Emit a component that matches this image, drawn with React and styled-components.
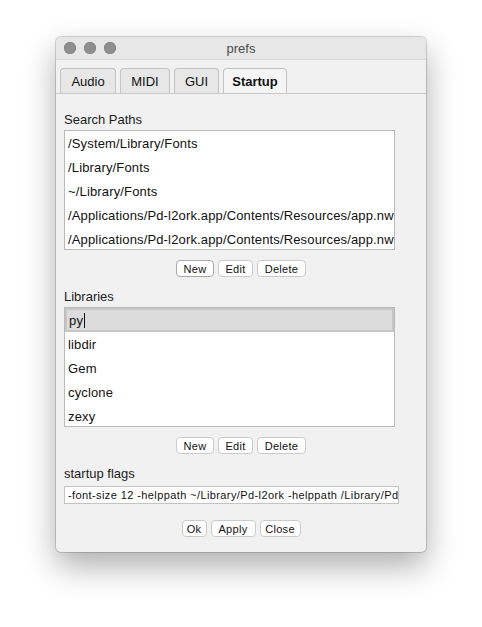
import * as React from 'react';
import styled, { createGlobalStyle } from "styled-components";

const GlobalStyle = createGlobalStyle`
    body {
        margin: 0;
        background: #fff;
        font-family: "Liberation Sans", Arial, sans-serif;
    }
`

const Page = styled.div`
    display: flex;
    justify-content: center;
    padding-top: 37px;
    height: 627px;
    box-sizing: border-box;
`

const Window = styled.div`
    width: 370px;
    height: 515px;
    background: #f1f1f1;
    border-radius: 5px;
    overflow: hidden;
    box-shadow: 0 14px 32px rgba(0, 0, 0, 0.32), 0 0 0 1px rgba(0, 0, 0, 0.16);
    display: flex;
    flex-direction: column;
`

const TitleBar = styled.div`
    height: 22px;
    flex: none;
    background: #e7e7e7;
    border-bottom: 1px solid #d9d9d9;
    display: flex;
    align-items: center;
    position: relative;
    padding-left: 8px;
    gap: 8px;
`

const Light = styled.span`
    width: 12px;
    height: 12px;
    border-radius: 50%;
    background: #8e8e8e;
    box-shadow: inset 0 0 0 0.5px #7a7a7a;
`

const Title = styled.div`
    position: absolute;
    left: 0;
    right: 0;
    text-align: center;
    font-size: 13px;
    color: #4d4d4d;
`

const TabBar = styled.div`
    display: flex;
    gap: 4px;
    padding: 8px 0 0 4px;
    border-bottom: 1px solid #c9c9c9;
`

const Tab = styled.div`
    width: ${p => p.$w}px;
    height: 25px;
    box-sizing: border-box;
    display: flex;
    align-items: center;
    justify-content: center;
    font-size: 13px;
    font-weight: ${p => (p.$active ? 'bold' : 'normal')};
    color: #111;
    background: ${p => (p.$active ? '#f5f5f5' : '#e7e7e7')};
    border: 1px solid #c4c4c4;
    border-bottom: none;
    border-radius: 4px 4px 0 0;
`

const Content = styled.div`
    display: flex;
    flex-direction: column;
    padding: 0 8px;
`

const Label = styled.div`
    font-size: 13px;
    line-height: 18px;
    color: #1c1c1c;
    margin-top: ${p => p.$top || 11}px;
    margin-bottom: 1px;
`

const ListBox = styled.div`
    width: 331px;
    height: 120px;
    box-sizing: border-box;
    background: #fff;
    border: 1px solid #b9b9b9;
    overflow: hidden;
`

const Row = styled.div`
    height: 24px;
    line-height: 25px;
    padding-left: 3px;
    font-size: 13px;
    letter-spacing: 0.15px;
    color: #111;
    white-space: nowrap;
    overflow: hidden;
`

const EditRow = styled(Row)`
    background: #dcdcdc;
    box-shadow: inset 0 0 0 2px #c6c6c6;
    padding-left: 4px;
    display: flex;
    align-items: center;
`

const Caret = styled.span`
    width: 1px;
    height: 15px;
    background: #111;
    margin-left: 1px;
`

const ButtonRow = styled.div`
    display: flex;
    justify-content: center;
    gap: 4px;
    margin-top: ${p => p.$top || 10}px;
    width: 354px;
`

const Button = styled.div`
    width: ${p => p.$w}px;
    height: 17px;
    box-sizing: border-box;
    display: flex;
    align-items: center;
    justify-content: center;
    background: #fff;
    border: 1px solid ${p => (p.$default ? '#a9a9a9' : '#cbcbcb')};
    border-radius: 4px;
    font-size: 11px;
    letter-spacing: 0.3px;
    color: #111;
`

const FlagsInput = styled.div`
    width: 335px;
    height: 18px;
    box-sizing: border-box;
    margin-top: 2px;
    background: #fff;
    border: 1px solid #c3c3c3;
    font-size: 11px;
    letter-spacing: 0.4px;
    line-height: 16px;
    padding-left: 3px;
    color: #111;
    white-space: nowrap;
    overflow: hidden;
`

const paths = [
    '/System/Library/Fonts',
    '/Library/Fonts',
    '~/Library/Fonts',
    '/Applications/Pd-l2ork.app/Contents/Resources/app.nw',
    '/Applications/Pd-l2ork.app/Contents/Resources/app.nw',
];

const libs = ['libdir', 'Gem', 'cyclone', 'zexy'];

const App = () => {
    const tabs = [
        { name: 'Audio', w: 56 },
        { name: 'MIDI', w: 50 },
        { name: 'GUI', w: 45 },
        { name: 'Startup', w: 64 },
    ];

    return (
        <Page>
            <GlobalStyle />
            <Window>
                <TitleBar>
                    <Light />
                    <Light />
                    <Light />
                    <Title>prefs</Title>
                </TitleBar>
                <TabBar>
                    {tabs.map(({ name, w }) => (
                        <Tab key={name} $w={w} $active={name === 'Startup'}>{name}</Tab>
                    ))}
                </TabBar>
                <Content>
                    <Label $top={17}>Search Paths</Label>
                    <ListBox>
                        {paths.map((p, i) => <Row key={i}>{p}</Row>)}
                    </ListBox>
                    <ButtonRow>
                        <Button $w={38} $default>New</Button>
                        <Button $w={35}>Edit</Button>
                        <Button $w={49}>Delete</Button>
                    </ButtonRow>
                    <Label>Libraries</Label>
                    <ListBox>
                        <EditRow>py<Caret /></EditRow>
                        {libs.map((l) => <Row key={l}>{l}</Row>)}
                    </ListBox>
                    <ButtonRow>
                        <Button $w={38}>New</Button>
                        <Button $w={35}>Edit</Button>
                        <Button $w={49}>Delete</Button>
                    </ButtonRow>
                    <Label>startup flags</Label>
                    <FlagsInput>-font-size 12 -helppath ~/Library/Pd-l2ork -helppath /Library/Pd-l2ork</FlagsInput>
                    <ButtonRow $top={16}>
                        <Button $w={25}>Ok</Button>
                        <Button $w={45}>Apply</Button>
                        <Button $w={41}>Close</Button>
                    </ButtonRow>
                </Content>
            </Window>
        </Page>
    )
};

export default App;
